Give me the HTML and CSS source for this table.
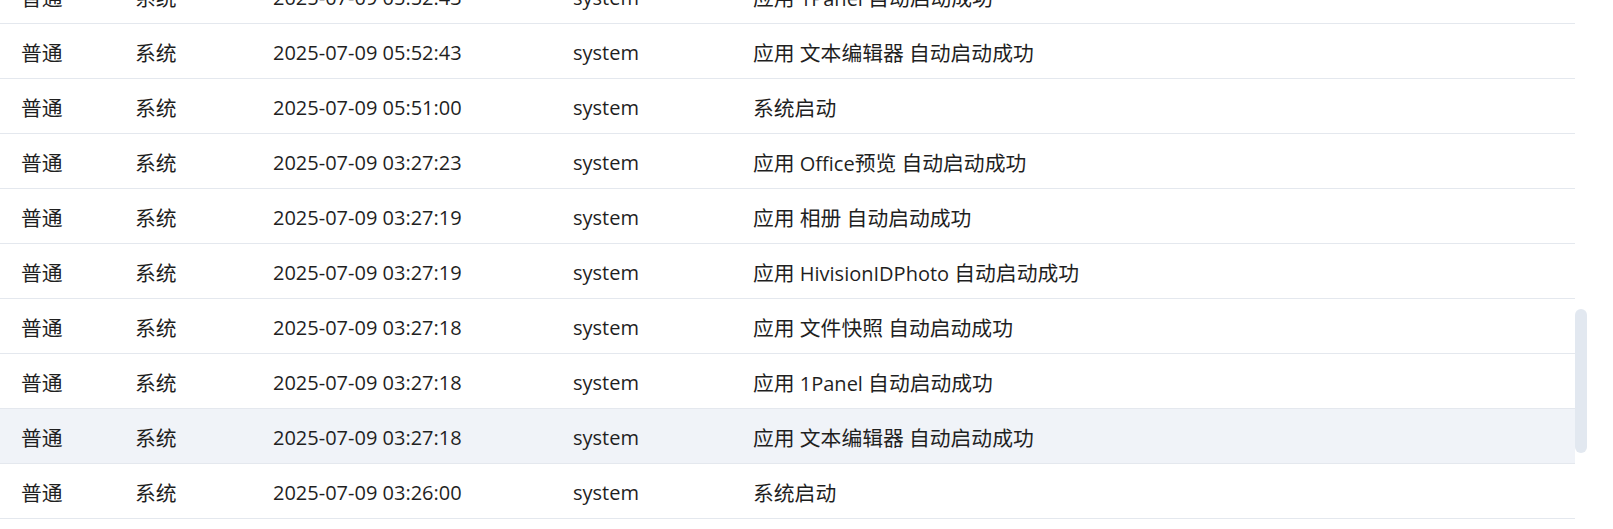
FILE: index.html
```html
<!DOCTYPE html>
<html lang="zh-CN">
<head>
<meta charset="utf-8">
<title>日志</title>
<link rel="stylesheet" href="styles.css">
</head>
<body>
<div class="viewport">
  <div class="log-table">
    <div class="rows">
      <div class="row"><span class="c c1 zh">普通</span><span class="c c2 zh">系统</span><span class="c c3">2025-07-09 05:52:43</span><span class="c c4">system</span><span class="c c5"><span class="zh">应用</span> 1Panel <span class="zh">自动启动成功</span></span></div>
      <div class="row"><span class="c c1 zh">普通</span><span class="c c2 zh">系统</span><span class="c c3">2025-07-09 05:52:43</span><span class="c c4">system</span><span class="c c5"><span class="zh">应用</span> <span class="zh">文本编辑器</span> <span class="zh">自动启动成功</span></span></div>
      <div class="row"><span class="c c1 zh">普通</span><span class="c c2 zh">系统</span><span class="c c3">2025-07-09 05:51:00</span><span class="c c4">system</span><span class="c c5"><span class="zh">系统启动</span></span></div>
      <div class="row"><span class="c c1 zh">普通</span><span class="c c2 zh">系统</span><span class="c c3">2025-07-09 03:27:23</span><span class="c c4">system</span><span class="c c5"><span class="zh">应用</span> Office<span class="zh">预览</span> <span class="zh">自动启动成功</span></span></div>
      <div class="row"><span class="c c1 zh">普通</span><span class="c c2 zh">系统</span><span class="c c3">2025-07-09 03:27:19</span><span class="c c4">system</span><span class="c c5"><span class="zh">应用</span> <span class="zh">相册</span> <span class="zh">自动启动成功</span></span></div>
      <div class="row"><span class="c c1 zh">普通</span><span class="c c2 zh">系统</span><span class="c c3">2025-07-09 03:27:19</span><span class="c c4">system</span><span class="c c5"><span class="zh">应用</span> HivisionIDPhoto <span class="zh">自动启动成功</span></span></div>
      <div class="row"><span class="c c1 zh">普通</span><span class="c c2 zh">系统</span><span class="c c3">2025-07-09 03:27:18</span><span class="c c4">system</span><span class="c c5"><span class="zh">应用</span> <span class="zh">文件快照</span> <span class="zh">自动启动成功</span></span></div>
      <div class="row"><span class="c c1 zh">普通</span><span class="c c2 zh">系统</span><span class="c c3">2025-07-09 03:27:18</span><span class="c c4">system</span><span class="c c5"><span class="zh">应用</span> 1Panel <span class="zh">自动启动成功</span></span></div>
      <div class="row hover"><span class="c c1 zh">普通</span><span class="c c2 zh">系统</span><span class="c c3">2025-07-09 03:27:18</span><span class="c c4">system</span><span class="c c5"><span class="zh">应用</span> <span class="zh">文本编辑器</span> <span class="zh">自动启动成功</span></span></div>
      <div class="row"><span class="c c1 zh">普通</span><span class="c c2 zh">系统</span><span class="c c3">2025-07-09 03:26:00</span><span class="c c4">system</span><span class="c c5"><span class="zh">系统启动</span></span></div>
    </div>
  </div>
  <div class="scroll-track"><div class="scroll-thumb"></div></div>
</div>
</body>
</html>
```

FILE: styles.css
```css
html, body {
  margin: 0;
  padding: 0;
  background: #ffffff;
}
body {
  font-family: "Open Sans", "Noto Sans CJK SC", sans-serif;
  font-size: 20px;
  color: #1f1f1f;
  width: 1613px;
  height: 529px;
  overflow: hidden;
}
.viewport {
  display: flex;
  height: 529px;
  overflow: hidden;
}
.log-table {
  width: 1575px;
  flex: none;
  overflow: hidden;
}
.rows {
  margin-top: -31px;
}
.row {
  display: grid;
  grid-template-columns: 114px 138px 300px 180px 1fr;
  height: 54px;
  align-items: center;
  border-bottom: 1px solid #e4e8ee;
}
.row.hover {
  background: #f0f3f8;
}
.c {
  padding-left: 21px;
  padding-top: 3px;
  white-space: nowrap;
  line-height: 1;
}
.zh {
  font-family: "Noto Sans CJK SC", "Open Sans", sans-serif;
  font-size: 20.8px;
}
.scroll-track {
  width: 12px;
  flex: none;
}
.scroll-thumb {
  margin-top: 309px;
  height: 144px;
  border-radius: 6px;
  background: #e2e8f0;
}
```
